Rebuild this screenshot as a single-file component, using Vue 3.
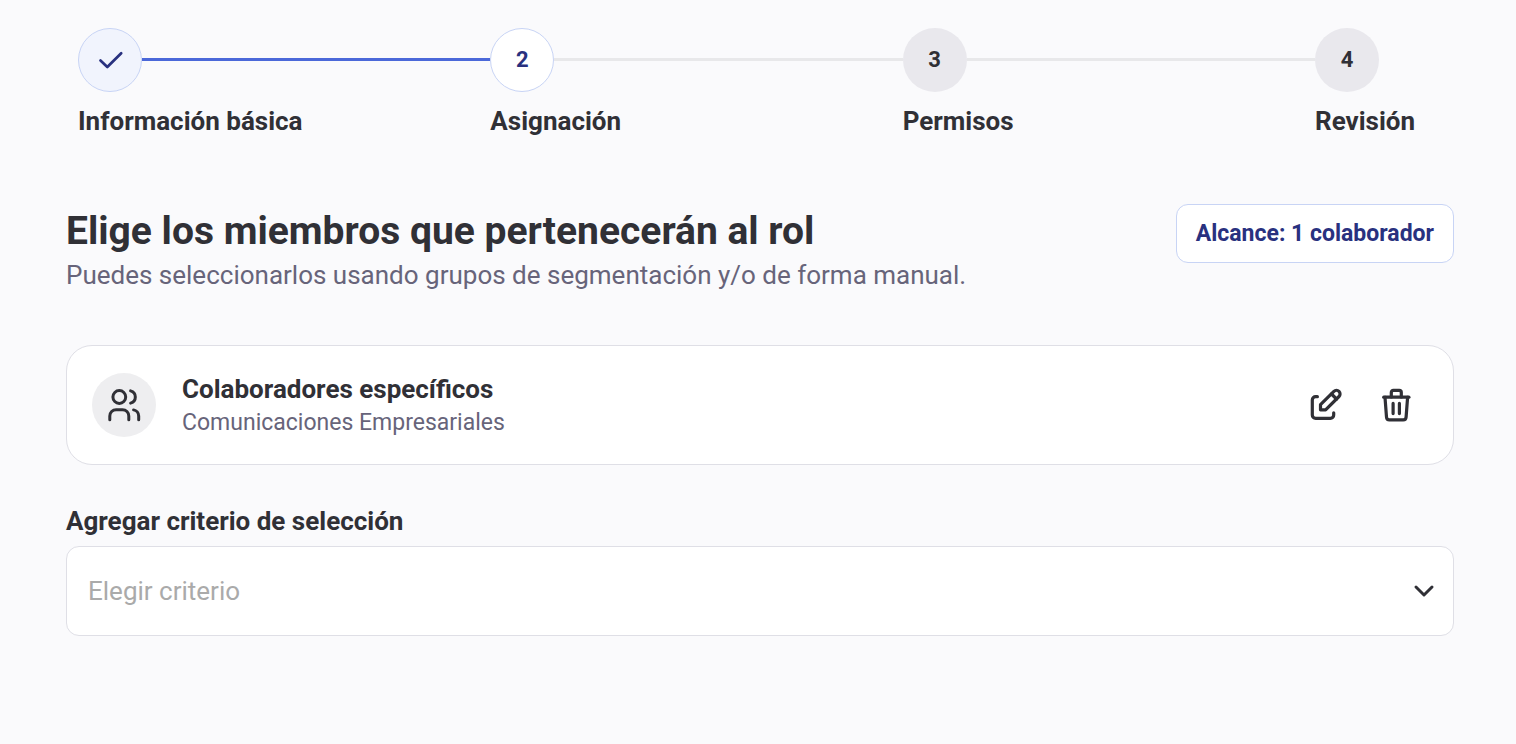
<script setup>
import { ref } from 'vue'

const steps = [
  { label: 'Información básica', state: 'done' },
  { label: 'Asignación', state: 'current' },
  { label: 'Permisos', state: 'pending' },
  { label: 'Revisión', state: 'pending' },
]

const criterion = ref('')
</script>

<template>
  <main class="page">
    <ol class="stepper">
      <li v-for="(step, i) in steps" :key="step.label" class="step" :class="step.state">
        <div class="track">
          <span class="marker">
            <svg v-if="step.state === 'done'" class="icon check" viewBox="0 0 40 40" aria-hidden="true">
              <path d="M10.5 20.5 17.3 27 31.2 13.2" />
            </svg>
            <template v-else>{{ i + 1 }}</template>
          </span>
          <span v-if="i < steps.length - 1" class="line"></span>
        </div>
        <span class="step-label">{{ step.label }}</span>
      </li>
    </ol>

    <section class="content">
      <header class="heading">
        <div>
          <h1>Elige los miembros que pertenecerán al rol</h1>
          <p class="subtitle">Puedes seleccionarlos usando grupos de segmentación y/o de forma manual.</p>
        </div>
        <span class="reach">Alcance: 1 colaborador</span>
      </header>

      <article class="card">
        <span class="avatar">
          <svg class="icon" viewBox="0 0 40 40" aria-hidden="true">
            <circle cx="15.3" cy="12" r="6.4" />
            <path d="M26.6 5.9a6.3 6.3 0 0 1 0 12.2" />
            <path d="M5.8 34.7V31a6.3 6.3 0 0 1 6.3-6.3h6.4a6.3 6.3 0 0 1 6.3 6.3v3.7" />
            <path d="M29.6 24.9a6.3 6.3 0 0 1 5.1 6.1v3.7" />
          </svg>
        </span>
        <div class="card-text">
          <h2>Colaboradores específicos</h2>
          <p>Comunicaciones Empresariales</p>
        </div>
        <div class="actions">
          <button type="button" aria-label="Editar">
            <svg class="icon bold" viewBox="0 0 40 40" aria-hidden="true">
              <path d="M11.4 11.7H9.6a3.3 3.3 0 0 0-3.3 3.3v15a3.3 3.3 0 0 0 3.3 3.3h14.8a3.3 3.3 0 0 0 3.3-3.3v-2.2" />
              <path d="M14.5 24.8v-5.1L27.9 6.4a3.6 3.6 0 0 1 5.1 5.1L19.6 24.8z" />
              <path d="m25.5 9 5 5" />
            </svg>
          </button>
          <button type="button" aria-label="Eliminar">
            <svg class="icon bold" viewBox="0 0 40 40" aria-hidden="true">
              <path d="M7.7 12.2h25.2" />
              <path d="M15.3 12V7.4a2 2 0 0 1 2-2h6a2 2 0 0 1 2 2V12" />
              <path d="m9 12.4 1.5 19.8a2.9 2.9 0 0 0 2.9 2.7h13.8a2.9 2.9 0 0 0 2.9-2.7l1.5-19.8" />
              <path d="M17.1 18.4v10.2M23.4 18.4v10.2" />
            </svg>
          </button>
        </div>
      </article>

      <div class="field">
        <label for="criterion">Agregar criterio de selección</label>
        <div class="select-wrap">
          <select id="criterion" v-model="criterion">
            <option value="" disabled>Elegir criterio</option>
          </select>
          <svg class="icon chevron" viewBox="0 0 24 24" aria-hidden="true">
            <path d="m4 8 8 8 8-8" />
          </svg>
        </div>
      </div>
    </section>
  </main>
</template>

<style>
html,
body {
  background: #fafafc;
}
</style>

<style scoped>
.page {
  box-sizing: border-box;
  padding: 28px 62px 40px 66px;
  font-family: Roboto, "Liberation Sans", sans-serif;
  font-size: 26px;
  line-height: 32px;
  color: #303036;
}

h1,
h2,
p,
ol {
  margin: 0;
  padding: 0;
}

.icon {
  display: block;
  flex: none;
  width: 40px;
  height: 40px;
  fill: none;
  stroke: #303036;
  stroke-width: 3;
  stroke-linecap: round;
  stroke-linejoin: round;
}

.icon.bold {
  stroke-width: 3.2;
}

.icon.check {
  stroke: #29317f;
  stroke-width: 2.7;
}

.stepper {
  display: grid;
  grid-template-columns: repeat(3, 1fr) 100px;
  padding: 0 39px 0 12px;
  list-style: none;
}

.track {
  display: flex;
  align-items: center;
}

.marker {
  box-sizing: border-box;
  display: flex;
  flex: none;
  align-items: center;
  justify-content: center;
  width: 64px;
  height: 64px;
  border-radius: 50%;
  background: #e9e8ed;
  font-size: 22px;
  font-weight: 700;
}

.done .marker,
.current .marker {
  border: 1px solid #c8d4f5;
  color: #29317f;
}

.done .marker {
  background: #f1f4fd;
}

.current .marker {
  background: #fff;
}

.line {
  flex: 1;
  height: 3px;
  margin-bottom: 2px;
  background: #e8e8ea;
}

.done .line {
  background: #4b68d9;
}

.step-label {
  display: block;
  margin-top: 13px;
  font-weight: 700;
  white-space: nowrap;
}

.heading {
  display: flex;
  align-items: flex-start;
  justify-content: space-between;
  gap: 24px;
  margin-top: 67px;
}

h1 {
  padding-top: 4px;
  font-size: 39px;
  font-weight: 700;
  line-height: 46px;
}

.subtitle {
  padding-top: 5px;
  color: #67647a;
}

.reach {
  padding: 13px 19px 12px;
  border: 1px solid #c8d4f5;
  border-radius: 12px;
  background: #fff;
  color: #29317f;
  font-size: 23px;
  font-weight: 700;
  white-space: nowrap;
}

.card {
  display: flex;
  align-items: center;
  margin-top: 54px;
  padding: 25px 37px 25px 25px;
  border: 1px solid #dfdfe6;
  border-radius: 26px;
  background: #fff;
}

.avatar {
  display: flex;
  flex: none;
  align-items: center;
  justify-content: center;
  width: 64px;
  height: 64px;
  border-radius: 50%;
  background: #eeeef0;
}

.card-text {
  flex: 1;
  padding: 2px 0 0 26px;
}

h2 {
  font-size: 26px;
  font-weight: 700;
}

.card-text p {
  margin-top: 2px;
  color: #67647a;
  font-size: 23px;
}

.actions {
  display: flex;
  gap: 30px;
}

button {
  padding: 0;
  border: 0;
  background: none;
  cursor: pointer;
}

.field {
  margin-top: 40px;
}

.field label {
  display: block;
  font-weight: 700;
}

.select-wrap {
  position: relative;
  margin-top: 9px;
}

select {
  box-sizing: border-box;
  display: block;
  width: 100%;
  height: 90px;
  padding: 0 60px 0 21px;
  border: 1px solid #dfdfe6;
  border-radius: 13px;
  appearance: none;
  background: #fff;
  color: #aaa;
  font: inherit;
}

.chevron {
  position: absolute;
  top: 33px;
  right: 18px;
  width: 24px;
  height: 24px;
  pointer-events: none;
}
</style>
